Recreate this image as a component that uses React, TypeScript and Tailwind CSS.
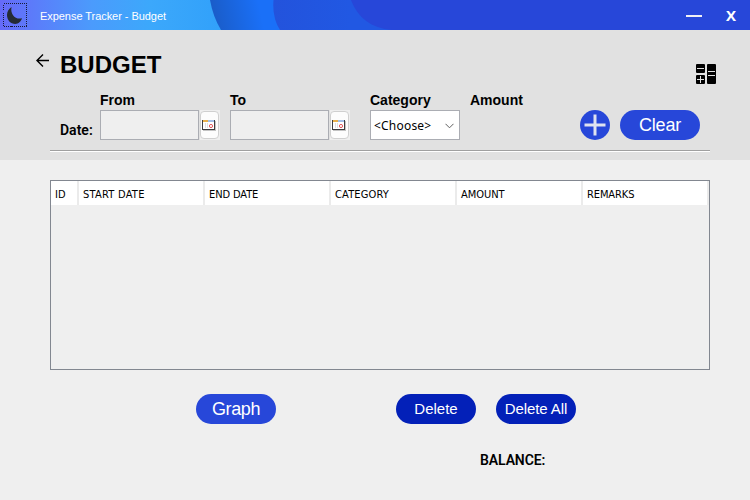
import type { ReactNode } from "react";

function HeaderArt() {
  return (
    <svg className="absolute inset-0" width="750" height="30" viewBox="0 0 750 30">
      <defs>
        <linearGradient id="sky" x1="0" y1="0" x2="230" y2="0" gradientUnits="userSpaceOnUse">
          <stop offset="0" stopColor="#656af9" />
          <stop offset="0.4" stopColor="#4b9bfc" />
          <stop offset="0.65" stopColor="#3ca8fb" />
          <stop offset="1" stopColor="#30a0fa" />
        </linearGradient>
        <linearGradient id="wave" x1="211" y1="10" x2="258" y2="0" gradientUnits="userSpaceOnUse">
          <stop offset="0" stopColor="#1a5cc8" />
          <stop offset="1" stopColor="#1a70f8" />
        </linearGradient>
        <linearGradient id="mid" x1="273" y1="0" x2="350" y2="0" gradientUnits="userSpaceOnUse">
          <stop offset="0" stopColor="#2353dc" />
          <stop offset="1" stopColor="#2158e3" />
        </linearGradient>
      </defs>
      <rect width="750" height="30" fill="url(#sky)" />
      <path d="M210 0Q213 17 221 30H750V0Z" fill="url(#wave)" />
      <path d="M273.500 0Q272 18 280 30H750V0Z" fill="url(#mid)" />
      <path d="M351 0C358 18 371 28 392 30H750V0Z" fill="#2747d9" />
    </svg>
  );
}

function CalendarButton() {
  return (
    <div className="flex h-[30px] w-5 items-center bg-[#efefef]">
      <div className="flex h-7 w-[19px] items-start rounded-[4px] border border-[#d0d0d0] bg-[#fdfdfd] pt-2 pl-px">
        <svg className="shrink-0" width="14" height="11" viewBox="0 0 14 11" shapeRendering="crispEdges">
          <path d="M1 10H13V1H14V11H1Z" fill="#c4c4c4" />
          <rect width="13" height="10" fill="#3d3d40" />
          <rect x="1" y="1" width="11" height="8" fill="#fff" />
          <rect x="1" width="5" height="2" fill="#e8b04a" />
          <rect x="6" width="6" height="2" fill="#a3bfe8" />
          <path d="M3 3H4V8H3ZM5 3H6V8H5Z" fill="#dedee2" />
          <circle cx="9" cy="6" r="1.600" fill="none" stroke="#e2585c" shapeRendering="auto" />
        </svg>
      </div>
    </div>
  );
}

function Field({ label, children, className }: { label: string; children?: ReactNode; className: string }) {
  return (
    <div className={className}>
      <div className="h-5 text-sm leading-5 font-bold">{label}</div>
      <div className="flex h-[30px]">{children}</div>
    </div>
  );
}

function DateInput() {
  return (
    <>
      <div className="h-[30px] w-[99px] border border-[#abadb3] bg-[#efefef]" />
      <div className="ml-px"><CalendarButton /></div>
    </>
  );
}

const columns = [
  { label: "ID", style: "w-[27px] tracking-[0px]" },
  { label: "START DATE", style: "w-[126px] tracking-[0.25px]" },
  { label: "END DATE", style: "w-[126px] tracking-[-0.1px]" },
  { label: "CATEGORY", style: "w-[126px] tracking-[0.15px]" },
  { label: "AMOUNT", style: "w-[126px] tracking-[-0.05px]" },
  { label: "REMARKS", style: "w-[126px] tracking-[-0.1px]" },
];

export default function App() {
  return (
    <div className="h-[500px] w-[750px] overflow-hidden bg-[#efefef] font-['Liberation_Sans',Arial,sans-serif] text-black">
      <header className="relative h-[30px]">
        <HeaderArt />
        <div className="relative flex h-[30px] items-center text-white">
          <div className="ml-[3px] flex size-6 items-center justify-center">
            <svg width="24" height="24" viewBox="0 0 24 24">
              <rect x="0.500" y="0.500" width="23" height="23" fill="none" stroke="#171c38" strokeDasharray="1 1" shapeRendering="crispEdges" />
              <path d="M8.500 4C6 5.500 4 8.500 4 12C4 17 7.500 21 12.300 21C15.500 21 18 18.500 19 15.300C12.500 17 7 11.500 8.500 4Z" fill="#252b35" />
            </svg>
          </div>
          <span className="ml-[13px] mt-[2px] text-[11px] leading-4 tracking-[-0.05px]">Expense Tracker - Budget</span>
          <div className="mt-[2px] ml-auto h-[2px] w-4 bg-[#f0f0f5]" />
          <span className="mr-[14px] ml-6 w-[10px] text-center font-['Open_Sans',sans-serif] text-[15px] leading-4 font-bold">X</span>
        </div>
      </header>

      <section className="h-[130px] bg-[#e1e1e1]">
        <div className="flex h-[60px] items-start pr-[34px] pl-9">
          <svg className="mt-[24px]" width="14" height="13" viewBox="0 0 14 13" fill="none" stroke="#000" strokeWidth="1.400">
            <path d="M7 0.600L1 6.500L7 12.400M1 6.500H13" />
          </svg>
          <h1 className="mt-[20px] ml-[10px] text-2xl leading-[30px] font-bold">BUDGET</h1>
          <svg className="mt-[34px] ml-auto" width="20" height="20" viewBox="0 0 20 20">
            <rect width="9" height="9" rx="1" />
            <rect y="11" width="9" height="9" rx="1" />
            <rect x="11" width="9" height="20" rx="1" />
            <path d="M1 4.500H8M1 15.500H8M4.500 12V19M12 7.500H19M12 11.500H19" stroke="#e1e1e1" />
          </svg>
        </div>
        <div className="flex h-[50px] pl-[60px]">
          <div className="mt-[31px] w-10 font-['Roboto','Liberation_Sans',sans-serif] text-[14px] leading-[18px] font-semibold">Date:</div>
          <Field label="From" className="w-[130px]"><DateInput /></Field>
          <Field label="To" className="w-[140px]"><DateInput /></Field>
          <Field label="Category" className="w-[100px]">
            <div className="flex h-[30px] w-[90px] items-center justify-between border border-[#abadb3] bg-white pr-[5px] pl-[3px] font-['Noto_Sans',sans-serif] text-xs">
              <span className="pt-px tracking-[0.2px]">&lt;Choose&gt;</span>
              <svg className="mt-0.5" width="9" height="6" viewBox="0 0 9 6" fill="none" stroke="#606060"><path d="M0.500 0.800L4.500 4.800L8.500 0.800" /></svg>
            </div>
          </Field>
          <Field label="Amount" className="w-[110px]" />
          <button className="mt-5 flex size-[30px] items-center justify-center rounded-full bg-[#2747d9]">
            <svg width="22" height="22" viewBox="0 0 22 22" stroke="#dfe2f0" strokeWidth="3"><path d="M0.500 11H21.500M11 0.500V21.500" /></svg>
          </button>
          <button className="mt-5 ml-[10px] h-[30px] w-20 rounded-full bg-[#2747d9] text-lg leading-[30px] tracking-[-0.2px] text-white">Clear</button>
        </div>
        <div className="mr-10 ml-[50px] mt-[10px] h-[2px] border-t border-[#a0a0a0] bg-white" />
      </section>

      <main className="pt-5 pr-10 pl-[50px]">
        <div className="h-[190px] border border-[#828790]">
          <div className="flex h-6 bg-white font-['DejaVu_Sans_Condensed','DejaVu_Sans',sans-serif] text-[11px] leading-[28px]">
            {columns.map((c) => (
              <div key={c.label} className={`${c.style} box-border shrink-0 border-r-2 border-[#ebebeb] pl-1 whitespace-nowrap first:w-7`}>{c.label}</div>
            ))}
          </div>
        </div>
        <div className="mt-6 flex pl-[146px] text-white">
          <button className="h-[30px] w-20 rounded-full bg-[#2747d9] text-lg leading-[30px] tracking-[-0.4px]">Graph</button>
          <button className="ml-[120px] h-[30px] w-20 rounded-full bg-[#0320b8] text-[15px] leading-[30px]">Delete</button>
          <button className="ml-5 h-[30px] w-20 rounded-full bg-[#0320b8] text-[15px] leading-[30px] tracking-[-0.1px] whitespace-nowrap">Delete All</button>
        </div>
        <div className="mt-[27px] ml-[430px] font-['Roboto','Liberation_Sans',sans-serif] text-[14px] leading-[18px] font-semibold tracking-[-0.1px]">BALANCE:</div>
      </main>
    </div>
  );
}
